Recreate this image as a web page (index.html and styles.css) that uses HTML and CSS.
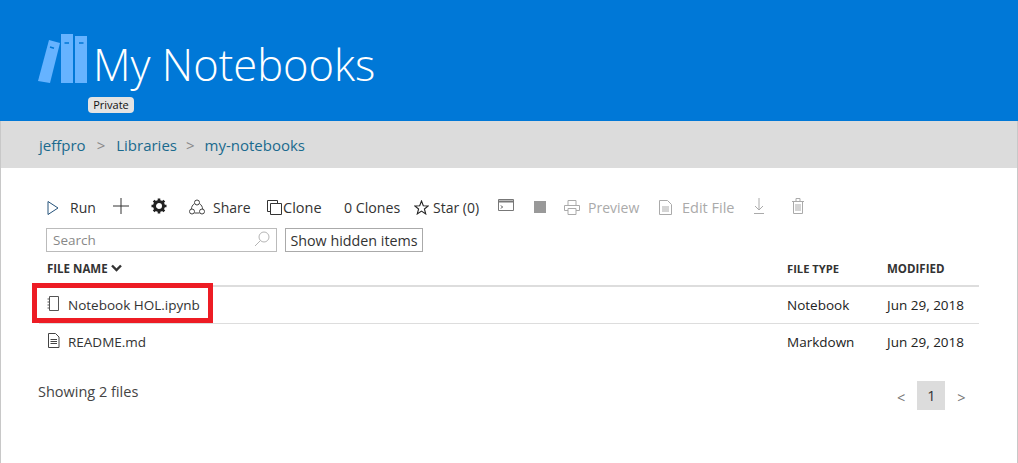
FILE: index.html
```html
<!DOCTYPE html>
<html lang="en">
<head>
    <meta charset="UTF-8">
    <title>My Notebooks</title>
    <link rel="stylesheet" href="styles.css">
</head>
<body>

    <header class="banner">
        <svg class="logo" width="50" height="50" viewBox="0 0 50 50">
            <path fill="#66b3ff" d="M11 6 L22 9 L12 49 L0 47 Z"/>
            <rect fill="#66b3ff" x="23" y="0" width="12" height="49"/>
            <rect fill="#66b3ff" x="37" y="2" width="12" height="47"/>
            <path stroke="#0078d7" stroke-width="1.500" d="M12 13 L16 14.200 M26.500 9 H31 M41 9 H45.500"/>
        </svg>
        <div class="title-wrap">
            <h1>My Notebooks</h1>
            <span class="badge">Private</span>
        </div>
    </header>

    <div class="page-body">
        <nav class="crumbs">
            <a href="#">jeffpro</a>
            <span class="sep">&gt;</span>
            <a href="#">Libraries</a>
            <span class="sep sep-last">&gt;</span>
            <a href="#">my-notebooks</a>
        </nav>

        <main class="content">
            <div class="toolbar">
                <span class="tool tool-run">
                    <svg width="12" height="16" viewBox="0 0 12 16"><path fill="none" stroke="#24527a" d="M1 1.500 L11 8 L1 14.500 Z"/></svg>
                    Run
                </span>
                <span class="tool tool-add">
                    <svg width="16" height="16" viewBox="0 0 16 16"><path stroke="#333" d="M8 0 V16 M0 8 H16"/></svg>
                </span>
                <span class="tool tool-gear">
                    <svg width="16" height="16" viewBox="0 0 16 16">
                        <circle cx="8" cy="8" r="4.500" fill="none" stroke="#222" stroke-width="3"/>
                        <path stroke="#222" stroke-width="2.600" d="M8 .5 V3 M8 13 V15.500 M.5 8 H3 M13 8 H15.500 M2.700 2.700 L4.500 4.500 M11.500 11.500 L13.300 13.300 M13.300 2.700 L11.500 4.500 M4.500 11.500 L2.700 13.300"/>
                    </svg>
                </span>
                <span class="tool tool-share">
                    <svg width="16" height="17" viewBox="0 0 16 17">
                        <g fill="none" stroke="#444">
                            <circle cx="8" cy="3.500" r="2.500"/>
                            <circle cx="3" cy="12.500" r="2.500"/>
                            <circle cx="13" cy="12.500" r="2.500"/>
                            <path d="M5.500 4.500 C3.500 6 2.500 8 2.300 10 M10.500 4.500 C12.500 6 13.500 8 13.700 10 M5.500 14 H10.500"/>
                        </g>
                    </svg>
                    Share
                </span>
                <span class="tool tool-clone">
                    <svg width="15" height="15" viewBox="0 0 15 15"><path fill="none" stroke="#333" d="M3.500 11.500 H.5 V.5 H10.500 V3.500 M3.500 3.500 H14.500 V14.500 H3.500 Z"/></svg>Clone
                </span>
                <span class="tool tool-count">0 Clones</span>
                <span class="tool tool-star">
                    <svg width="15" height="15" viewBox="0 0 15 15"><path fill="none" stroke="#222" stroke-width="1.100" d="M7.500 1 L9.300 5.700 L14.300 5.900 L10.400 9 L11.700 13.900 L7.500 11.100 L3.300 13.900 L4.600 9 L.7 5.900 L5.700 5.700 Z"/></svg>
                    Star (0)
                </span>
                <span class="tool tool-term">
                    <svg width="16" height="12" viewBox="0 0 16 12">
                        <path fill="none" stroke="#777" d="M.5 .5 H15.500 V11.500 H.5 Z"/>
                        <path stroke="#777" stroke-width="2" d="M1 2.500 H15"/>
                        <path fill="none" stroke="#444" d="M3 6.500 L4.500 8 L3 9.500"/>
                    </svg>
                </span>
                <span class="tool tool-stop"><i class="stop-box"></i></span>
                <span class="tool tool-preview off">
                    <svg width="16" height="15" viewBox="0 0 16 15"><path fill="none" stroke="#aaa" d="M4 5.500 V.5 H12 V5.500 M4 10.500 H.5 V5.500 H15.500 V10.500 H12 M4 8.500 H12 V14.500 H4 Z"/></svg>
                    Preview
                </span>
                <span class="tool tool-edit off">
                    <svg width="13" height="15" viewBox="0 0 13 15"><path fill="none" stroke="#aaa" d="M.5 .5 H8.500 L12.500 4.500 V14.500 H.5 Z M3 7 H10 M3 9 H10 M3 11 H10"/></svg>
                    Edit File
                </span>
                <span class="tool tool-down off">
                    <svg width="10" height="16" viewBox="0 0 10 16"><path fill="none" stroke="#aaa" d="M5 0 V12 M1 8 L5 12 L9 8 M0 15.500 H10"/></svg>
                </span>
                <span class="tool tool-trash off">
                    <svg width="12" height="16" viewBox="0 0 12 16"><path fill="none" stroke="#aaa" d="M0 3.500 H12 M4 3.500 V.5 H8 V3.500 M1.500 3.500 V15.500 H10.500 V3.500 M4 6 V13 M6 6 V13 M8 6 V13"/></svg>
                </span>
            </div>

            <div class="filter-row">
                <label class="search">
                    <input type="text" placeholder="Search">
                    <svg width="16" height="16" viewBox="0 0 16 16"><g fill="none" stroke="#b5b5b5"><circle cx="10" cy="6" r="5"/><path d="M6.500 9.500 L1 15"/></g></svg>
                </label>
                <button class="hidden-btn">Show hidden items</button>
            </div>

            <div class="row head">
                <div class="col-name">FILE NAME
                    <svg width="11" height="8" viewBox="0 0 11 8"><path fill="none" stroke="#333" stroke-width="2.400" d="M1 1.500 L5.500 6 L10 1.500"/></svg>
                </div>
                <div class="col-type">FILE TYPE</div>
                <div class="col-date">MODIFIED</div>
            </div>

            <div class="row file">
                <div class="col-name">
                    <svg width="13" height="15" viewBox="0 0 13 15"><path fill="none" stroke="#555" d="M2.500 .5 H11.500 V14.500 H2.500 Z M.5 3 H3 M.5 6 H3 M.5 9 H3 M.5 12 H3"/></svg>
                    Notebook HOL.ipynb
                </div>
                <div class="col-type">Notebook</div>
                <div class="col-date">Jun 29, 2018</div>
            </div>
            <div class="row file last">
                <div class="col-name">
                    <svg width="13" height="15" viewBox="0 0 13 15"><path fill="none" stroke="#444" d="M1.500 .5 H8.500 L12 4 V14.500 H1.500 Z M3.500 6.500 H10 M3.500 8.500 H10 M3.500 10.500 H10"/></svg>
                    README.md
                </div>
                <div class="col-type">Markdown</div>
                <div class="col-date">Jun 29, 2018</div>
            </div>

            <div class="footer-row">
                <span class="showing">Showing 2 files</span>
                <div class="pager">
                    <span class="arrow">&lt;</span>
                    <span class="page">1</span>
                    <span class="arrow">&gt;</span>
                </div>
            </div>

            <div class="highlight"></div>
        </main>
    </div>

</body>
</html>
```

FILE: styles.css
```css
* {
    box-sizing: border-box;
}
body {
    margin: 0;
    height: 463px;
    overflow: hidden;
    background-color: white;
    color: #333;
    font-family: "Open Sans", Arial, sans-serif;
    font-size: 13.5px;
}
.banner {
    height: 121px;
    background-color: #0078d7;
    padding: 34px 0 0 38px;
    display: flex;
    align-items: flex-start;
}
.logo {
    margin-right: 5px;
    flex: none;
}
.title-wrap {
    position: relative;
}
h1 {
    margin: 0;
    color: white;
    font-weight: 300;
    font-size: 43.500px;
    line-height: 62px;
}
.badge {
    position: absolute;
    left: -5px;
    top: 63px;
    width: 46px;
    height: 16px;
    background-color: #e3e3e3;
    border-radius: 4px;
    color: #111;
    font-size: 11px;
    line-height: 16px;
    text-align: center;
}
.page-body {
    height: 342px;
    border-left: 1px solid #c8c8c8;
    border-right: 1px solid #c8c8c8;
}
.crumbs {
    height: 47px;
    background-color: #dcdcdc;
    padding: 1px 0 0 38px;
    display: flex;
    align-items: center;
    font-size: 15px;
}
.crumbs a {
    color: #1a6a8e;
    text-decoration: none;
}
.sep {
    color: #888;
    margin: 0 11px;
}
.sep-last {
    margin: 0 10px 0 9px;
}
.content {
    position: relative;
    padding: 24px 38px 0 37px;
}
.toolbar {
    height: 30px;
    position: relative;
    display: flex;
    align-items: center;
    white-space: nowrap;
    color: #333;
    font-size: 14px;
}
.tool {
    position: absolute;
    top: 6px;
    display: flex;
    align-items: center;
    gap: 8px;
}
.off {
    color: #aaa;
}
.tool-run { left: 9px; gap: 11px; }
.tool-add { left: 75px; }
.tool-gear { left: 113px; }
.tool-share { left: 151px; }
.tool-clone { left: 229px; gap: 1px; font-size: 14.500px; }
.tool-count { left: 306px; font-size: 14.200px; }
.tool-star { left: 376px; gap: 4px; }
.tool-term { left: 460px; top: 7px; }
.tool-stop { left: 496px; top: 9px; }
.tool-preview { left: 526px; }
.tool-edit { left: 621px; gap: 10px; font-size: 14.500px; }
.tool-down { left: 716px; }
.tool-trash { left: 754px; }
.stop-box {
    display: block;
    width: 12px;
    height: 12px;
    background-color: #999;
}
.filter-row {
    display: flex;
    gap: 8px;
    margin: 6px 0 0 8px;
}
.search {
    position: relative;
    display: block;
    width: 231px;
    height: 24px;
}
.search input {
    width: 100%;
    height: 24px;
    border: 1px solid #bbb;
    padding: 0 6px;
    font-family: inherit;
    font-size: 13.500px;
}
.search input::placeholder {
    color: #888;
}
.search svg {
    position: absolute;
    right: 7px;
    top: 3px;
}
.hidden-btn {
    height: 24px;
    width: 138px;
    padding: 0;
    background-color: white;
    border: 1px solid #aaa;
    font-family: inherit;
    font-size: 14.300px;
    color: #333;
}
.row {
    display: flex;
    align-items: center;
    margin-left: 1px;
    border-bottom: 1px solid #ddd;
}
.col-name {
    width: 740px;
    display: flex;
    align-items: center;
    gap: 8px;
}
.col-type {
    width: 100px;
}
.head {
    height: 34px;
    margin-top: 1px;
    padding: 0 0 2px 8px;
    border-bottom: 2px solid #ddd;
    font-weight: 700;
    font-size: 11.500px;
}
.head .col-name {
    gap: 3px;
    width: 740px;
}
.head .col-type {
    font-size: 11.200px;
}
.file {
    height: 37px;
    padding: 0 0 1px 8px;
    color: #333;
}
.file .col-name {
    width: 740px;
    gap: 8px;
}
.file svg {
    margin-bottom: 3px;
}
.file .col-type,
.file .col-date {
    color: #222;
}
.last {
    border-bottom-color: transparent;
}
.footer-row {
    position: relative;
    margin-top: 21px;
    font-size: 14.500px;
}
.showing {
    color: #444;
}
.pager {
    position: absolute;
    left: 859px;
    top: -1px;
    display: flex;
    align-items: center;
    gap: 12px;
    color: #777;
}
.arrow {
    padding-top: 3px;
}
.page {
    width: 28px;
    height: 29px;
    background-color: #dcdcdc;
    color: #333;
    text-align: center;
    line-height: 29px;
}
.highlight {
    position: absolute;
    left: 31px;
    top: 115px;
    width: 181px;
    height: 40px;
    border: 5px solid #ed1c24;
}
```
